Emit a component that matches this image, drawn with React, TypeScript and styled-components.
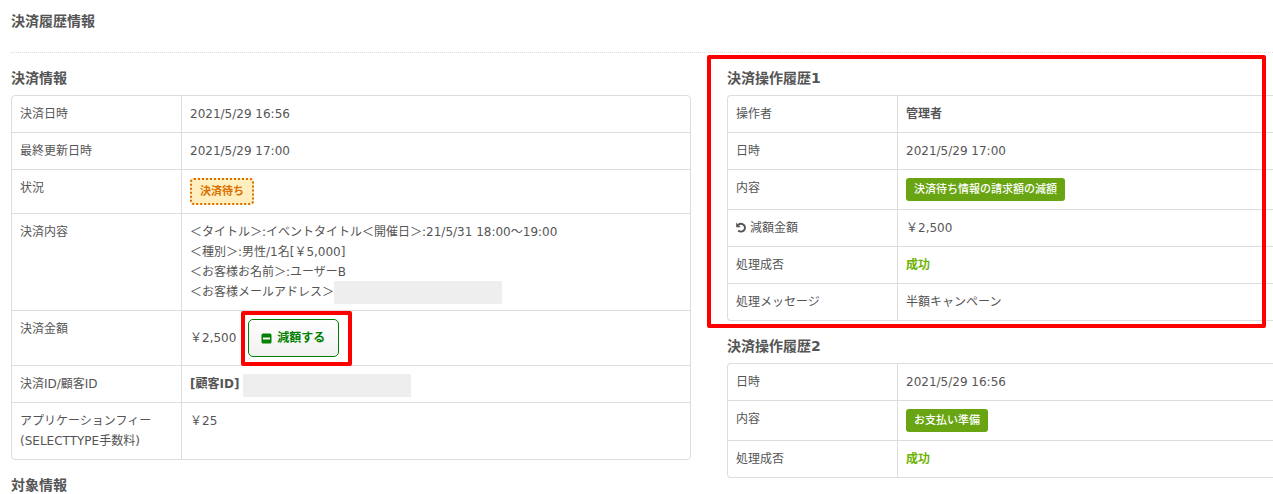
import React from "react";
import styled, { createGlobalStyle } from "styled-components";

const GlobalStyle = createGlobalStyle`
  *, *::before, *::after { box-sizing: border-box; }
  body {
    margin: 0;
    background: #fff;
    color: #555;
    font-family: "DejaVu Sans", "Noto Sans CJK JP", sans-serif;
    font-size: 12px;
    line-height: 20px;
    overflow: hidden;
  }
`;

const Page = styled.main`
  padding: 11px 0 0 11px;
`;

const PageTitle = styled.h1`
  margin: 0;
  padding-bottom: 21px;
  border-bottom: 1px dotted #ddd;
  font-size: 14px;
  line-height: 20px;
`;

const Columns = styled.div`
  display: grid;
  grid-template-columns: 680fr 546fr;
  gap: 36px;
  padding-top: 15px;
  align-items: start;
`;

const Column = styled.div`
  display: flex;
  flex-direction: column;
  gap: 15px;
  min-width: 0;
`;

const Section = styled.section`
  position: relative;
`;

const SectionTitle = styled.h2`
  margin: 0 0 7px;
  font-size: 14px;
  line-height: 20px;
`;

const InfoTable = styled.table<{ $open?: boolean }>`
  width: 100%;
  border: 1px solid #ddd;
  border-right-width: ${(p) => (p.$open ? 0 : 1)}px;
  border-radius: ${(p) => (p.$open ? "4px 0 0 4px" : "4px")};
  border-collapse: separate;
  border-spacing: 0;
  table-layout: fixed;

  tr + tr > * {
    border-top: 1px solid #ddd;
  }
`;

const Label = styled.th`
  width: 169px;
  padding: 8px;
  font-weight: normal;
  text-align: left;
  vertical-align: top;
`;

const Value = styled.td`
  padding: 8px;
  border-left: 1px solid #ddd;
  vertical-align: top;
`;

const Line = styled.div<{ $align?: string; $gap?: number }>`
  display: flex;
  height: 20px;
  gap: ${(p) => p.$gap ?? 0}px;
  align-items: ${(p) => p.$align ?? "center"};
  white-space: nowrap;
`;

const Redacted = styled.span`
  flex: none;
  width: 168px;
  height: 23px;
  background: #eee;
`;

const PendingBadge = styled.span`
  display: block;
  width: fit-content;
  padding: 3px 8px 2px;
  border: 2px dotted #d96f00;
  border-radius: 4px;
  background: #ffefbf;
  color: #d96f00;
  font-size: 11px;
  font-weight: bold;
  line-height: 18px;
`;

const ActionBadge = styled.span`
  display: block;
  width: fit-content;
  padding: 0 8px;
  border-radius: 3px;
  background: #69a512;
  color: #fff;
  font-size: 11px;
  font-weight: 500;
  line-height: 23px;
`;

const Success = styled.strong`
  color: #6db300;
`;

const AmountRow = styled.div`
  display: flex;
  align-items: center;
  gap: 12px;
`;

const ButtonHolder = styled.div`
  position: relative;
`;

const ReduceButton = styled.button`
  display: flex;
  align-items: center;
  gap: 5px;
  height: 38px;
  padding: 0 13px 0 12px;
  border: 1px solid #008000;
  border-radius: 5px;
  background: linear-gradient(#fff, #f0f0f0);
  color: #008000;
  font: inherit;
  font-weight: bold;
`;

const Highlight = styled.div<{ $inset: string }>`
  position: absolute;
  inset: ${(p) => p.$inset};
  border: 4px solid #f00;
  border-radius: 2px;
  pointer-events: none;
`;

const UndoMark = styled.svg`
  margin-right: 3px;
  vertical-align: -1px;
`;

const MinusSquare = () => (
  <svg width="11" height="11" viewBox="0 0 11 11" aria-hidden="true">
    <path
      fill="currentColor"
      fillRule="evenodd"
      d="M2 0.5h7a1.5 1.5 0 0 1 1.500 1.500v7a1.500 1.500 0 0 1-1.500 1.500H2a1.500 1.500 0 0 1-1.500-1.500v-7a1.500 1.500 0 0 1 1.500-1.500zM2 4.500v2h7v-2z"
    />
  </svg>
);

const Undo = () => (
  <UndoMark width="11" height="11" viewBox="0 0 11 11" aria-hidden="true">
    <path fill="currentColor" d="M0.200 0.500L4.800 5.200H0.200z" />
    <path
      fill="none"
      stroke="currentColor"
      strokeWidth="2"
      d="M2.300 2.900A3.900 3.900 0 1 1 2.300 8.500"
    />
  </UndoMark>
);

const Row = ({ label, children }: { label: React.ReactNode; children: React.ReactNode }) => (
  <tr>
    <Label scope="row">{label}</Label>
    <Value>{children}</Value>
  </tr>
);

export default function App() {
  return (
    <>
      <GlobalStyle />
      <Page lang="ja">
        <PageTitle>決済履歴情報</PageTitle>
        <Columns>
          <Column>
            <Section>
              <SectionTitle>決済情報</SectionTitle>
              <InfoTable>
                <tbody>
                  <Row label="決済日時">2021/5/29 16:56</Row>
                  <Row label="最終更新日時">2021/5/29 17:00</Row>
                  <Row label="状況">
                    <PendingBadge>決済待ち</PendingBadge>
                  </Row>
                  <Row label="決済内容">
                    <Line>＜タイトル＞:イベントタイトル＜開催日＞:21/5/31 18:00～19:00</Line>
                    <Line>＜種別＞:男性/1名[￥5,000]</Line>
                    <Line>＜お客様お名前＞:ユーザーB</Line>
                    <Line>
                      ＜お客様メールアドレス＞
                      <Redacted />
                    </Line>
                  </Row>
                  <Row label="決済金額">
                    <AmountRow>
                      ￥2,500
                      <ButtonHolder>
                        <ReduceButton type="button">
                          <MinusSquare />
                          減額する
                        </ReduceButton>
                        <Highlight $inset="-8px -13px -9px -7px" />
                      </ButtonHolder>
                    </AmountRow>
                  </Row>
                  <Row label="決済ID/顧客ID">
                    <Line $align="flex-start" $gap={4}>
                      <strong>[顧客ID]</strong>
                      <Redacted />
                    </Line>
                  </Row>
                  <Row
                    label={
                      <>
                        アプリケーションフィー
                        <br />
                        (SELECTTYPE手数料)
                      </>
                    }
                  >
                    ￥25
                  </Row>
                </tbody>
              </InfoTable>
            </Section>
            <Section>
              <SectionTitle>対象情報</SectionTitle>
            </Section>
          </Column>
          <Column>
            <Section>
              <SectionTitle>決済操作履歴1</SectionTitle>
              <InfoTable $open>
                <tbody>
                  <Row label="操作者">
                    <strong>管理者</strong>
                  </Row>
                  <Row label="日時">2021/5/29 17:00</Row>
                  <Row label="内容">
                    <ActionBadge>決済待ち情報の請求額の減額</ActionBadge>
                  </Row>
                  <Row
                    label={
                      <>
                        <Undo />
                        減額金額
                      </>
                    }
                  >
                    ￥2,500
                  </Row>
                  <Row label="処理成否">
                    <Success>成功</Success>
                  </Row>
                  <Row label="処理メッセージ">半額キャンペーン</Row>
                </tbody>
              </InfoTable>
              <Highlight $inset="-13px 7px -7px -20px" />
            </Section>
            <Section>
              <SectionTitle>決済操作履歴2</SectionTitle>
              <InfoTable $open>
                <tbody>
                  <Row label="日時">2021/5/29 16:56</Row>
                  <Row label="内容">
                    <ActionBadge>お支払い準備</ActionBadge>
                  </Row>
                  <Row label="処理成否">
                    <Success>成功</Success>
                  </Row>
                </tbody>
              </InfoTable>
            </Section>
          </Column>
        </Columns>
      </Page>
    </>
  );
}
